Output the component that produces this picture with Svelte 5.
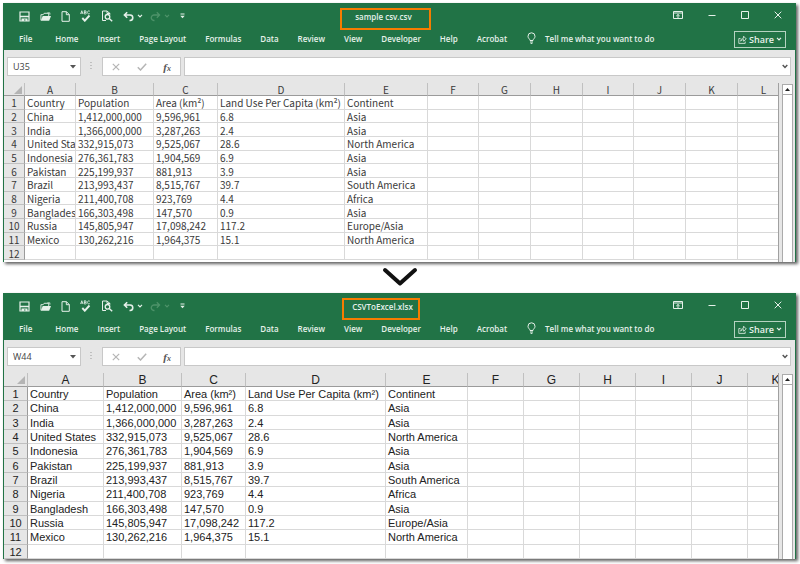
<script>
  const tabs = ['File', 'Home', 'Insert', 'Page Layout', 'Formulas', 'Data', 'Review', 'View', 'Developer', 'Help', 'Acrobat']

  const csvRows = [
    ['Country', 'Population', 'Area (km²)', 'Land Use Per Capita (km²)', 'Continent'],
    ['China', '1,412,000,000', '9,596,961', '6.8', 'Asia'],
    ['India', '1,366,000,000', '3,287,263', '2.4', 'Asia'],
    ['United States', '332,915,073', '9,525,067', '28.6', 'North America'],
    ['Indonesia', '276,361,783', '1,904,569', '6.9', 'Asia'],
    ['Pakistan', '225,199,937', '881,913', '3.9', 'Asia'],
    ['Brazil', '213,993,437', '8,515,767', '39.7', 'South America'],
    ['Nigeria', '211,400,708', '923,769', '4.4', 'Africa'],
    ['Bangladesh', '166,303,498', '147,570', '0.9', 'Asia'],
    ['Russia', '145,805,947', '17,098,242', '117.2', 'Europe/Asia'],
    ['Mexico', '130,262,216', '1,964,375', '15.1', 'North America'],
    []
  ]

  const books = [
    {
      id: 'csv',
      title: 'sample csv.csv',
      cell: 'U35',
      head: 21,
      cols: [51, 78, 64, 127, 83, 51, 52, 52, 51, 52, 52, 52]
    },
    {
      id: 'xlsx',
      title: 'CSVToExcel.xlsx',
      cell: 'W44',
      head: 24,
      cols: [76, 78, 64, 140, 82, 56, 56, 56, 56, 56, 56]
    }
  ]

  const letter = (i) => String.fromCharCode(65 + i)
  const tableWidth = (book) => book.cols.reduce((sum, w) => sum + w, book.head)
</script>

{#snippet chevron()}
  <svg width="6" height="4" viewBox="0 0 6 4"><path d="M1 .8 3 2.8 5 .8" stroke-width="1.2" /></svg>
{/snippet}

{#snippet excel(book)}
  <section class="window {book.id}">
    <header>
      <div class="titlebar">
        <div class="quick">
          <button aria-label="Save">
            <svg width="11" height="11" viewBox="0 0 11 11"><path d="M1 1h9v9H1z" stroke-width="1.2" /><path class="solid" d="M1 4.800h9v1.400H1zM2.500 7.500h6V10H6.500V8.500H5V10H2.500z" /></svg>
          </button>
          <button aria-label="Open">
            <svg width="11" height="11" viewBox="0 0 12 11"><path d="M1 9.500V3.500h2.500L4.500 2h5v3" /><path class="solid" d="M3 5h9l-2 5H.8z" /><path d="M8 1.500h2.800v2" stroke-width=".8" /></svg>
          </button>
          <button aria-label="New">
            <svg width="9" height="11" viewBox="0 0 9 11"><path d="M1 .7h4.500L8.300 3.600v6.700H1zM5.300.7v3h3" /></svg>
          </button>
          <button aria-label="Spelling">
            <svg width="11" height="12" viewBox="0 0 11 12"><path d="m.6 4 1.200-3.300L3 4M1 3h1.600M4.300.7V4h1.200a.8.8 0 0 0 0-1.700H4.300h1a.8.8 0 0 0 0-1.600zM9.800 1.200a1.500 1.500 0 1 0 0 2.400" stroke-width=".8" /><path d="m2.300 8 2.500 2.700L9.500 5.500" stroke-width="1.900" /></svg>
          </button>
          <button aria-label="Print Preview">
            <svg width="12" height="12" viewBox="0 0 12 12"><path d="M5 10.500H1.500V1H6l3 2.500v1M6 1v2.500h3" /><circle cx="6.500" cy="6.800" r="2.300" stroke-width="1.300" /><path d="m8.200 8.500 3 2.700" stroke-width="1.500" /></svg>
          </button>
          <button aria-label="Undo">
            <svg width="11" height="11" viewBox="0 0 11 11"><path d="M4.200 1.200 1.400 4l2.800 2.800M1.500 4h5.300a2.700 2.700 0 0 1 .4 5.500H6.500" stroke-width="1.600" /></svg>
          </button>
          <button class="more" aria-label="Undo history">{@render chevron()}</button>
          <button class="off" disabled aria-label="Redo">
            <svg width="11" height="11" viewBox="0 0 11 11"><path d="M6.800 1.200 9.600 4 6.800 6.800M9.500 4H4.200a2.700 2.700 0 0 0-.4 5.500h.7" stroke-width="1.300" /></svg>
          </button>
          <button class="more off" disabled aria-label="Redo history">{@render chevron()}</button>
          <button aria-label="Customize toolbar">
            <svg width="5" height="6" viewBox="0 0 5 6"><path d="M.5 1h4" /><path class="solid" d="M.3 2.800h4.400L2.500 5.200z" /></svg>
          </button>
        </div>
        <h2>{book.title}</h2>
        <div class="controls">
          <button aria-label="Ribbon display options">
            <svg width="10" height="8" viewBox="0 0 10 8"><path d="M.5.5h9v7h-9zM.5 2h9M5 7V3.500M3.300 5 5 3.500 6.700 5" /></svg>
          </button>
          <button aria-label="Minimize">
            <svg width="8" height="8" viewBox="0 0 8 8"><path d="M.5 4.500h7" /></svg>
          </button>
          <button aria-label="Maximize">
            <svg width="8" height="8" viewBox="0 0 8 8"><path d="M.5.5h7v7h-7z" /></svg>
          </button>
          <button aria-label="Close">
            <svg width="8" height="8" viewBox="0 0 8 8"><path d="m.7.700 6.600 6.600M7.300.700.7 7.300" /></svg>
          </button>
        </div>
      </div>
      <nav>
        {#each tabs as tab (tab)}
          <button class="tab">{tab}</button>
        {/each}
        <button class="tell">
          <svg width="9" height="12" viewBox="0 0 9 12"><path d="M3 8.500C3 7 1 6.500 1 4.300a3.500 3.500 0 0 1 7 0C8 6.500 6 7 6 8.500zM3 10h3M3.600 11.400h1.800" /></svg>
          Tell me what you want to do
        </button>
        <button class="share">
          <svg width="9" height="9" viewBox="0 0 9 9"><path d="M2.500 3.500H.8v4.900h6.400V6.500M2.700 6.200C3 4 4 3.200 5.600 3.200V1.200L8.300 4 5.600 6.200V4.600C4.400 4.600 3.500 5 2.700 6.200z" stroke-width=".8" /></svg>
          Share
          {@render chevron()}
        </button>
      </nav>
    </header>

    <div class="formula">
      <div class="box name">
        <input aria-label="Name box" value={book.cell} />
        <button aria-label="Choose name"><svg width="6" height="4" viewBox="0 0 6 4"><path class="solid" d="M0 0h6L3 3.500z" /></svg></button>
      </div>
      <svg class="dots" width="2" height="9" viewBox="0 0 2 9"><path d="M1 0v9" stroke-dasharray="1 2" /></svg>
      <div class="box tools">
        <button class="dim" aria-label="Cancel"><svg width="8" height="8" viewBox="0 0 8 8"><path d="m.8.800 6.400 6.400M7.200.800.8 7.200" stroke-width="1.200" /></svg></button>
        <button class="dim" aria-label="Enter"><svg width="10" height="8" viewBox="0 0 10 8"><path d="m.8 4.300 2.700 2.700L9.200.800" stroke-width="1.500" /></svg></button>
        <button class="fx" aria-label="Insert function">f<small>x</small></button>
      </div>
      <div class="box entry">
        <input aria-label="Formula bar" />
        <button aria-label="Expand formula bar"><svg width="6" height="5" viewBox="0 0 6 5"><path d="M.7 1 3 3.500 5.300 1" stroke-width="1.500" /></svg></button>
      </div>
    </div>

    <div class="grid">
      <div class="sheet">
        <table style:width="{tableWidth(book)}px">
          <colgroup>
            <col style:width="{book.head}px" />
            {#each book.cols as w}
              <col style:width="{w}px" />
            {/each}
          </colgroup>
          <thead>
            <tr>
              <th class="corner" aria-label="Select all"><svg width="8" height="8" viewBox="0 0 8 8"><path class="solid" d="M8 0v8H0z" /></svg></th>
              {#each book.cols as _, i}
                <th scope="col">{letter(i)}</th>
              {/each}
            </tr>
          </thead>
          <tbody>
            {#each csvRows as row, r}
              <tr>
                <th scope="row">{r + 1}</th>
                {#each book.cols as _, i}
                  <td>{row[i] ?? ''}</td>
                {/each}
              </tr>
            {/each}
          </tbody>
        </table>
      </div>
      <div class="scroll">
        <button aria-label="Scroll up"><svg width="5" height="3" viewBox="0 0 5 3"><path class="solid" d="M0 3h5L2.500 0z" /></svg></button>
      </div>
    </div>
  </section>
{/snippet}

<main>
  {@render excel(books[0])}
  <svg class="arrow" width="36" height="20" viewBox="0 0 36 20"><path d="M3 3 18 16.500 33 3" /></svg>
  {@render excel(books[1])}
</main>

<style>
  :global(body) {
    background: #fff;
  }

  main {
    display: flex;
    flex-direction: column;
    padding: 3px 4px 5px 3px;
    font-family: 'Open Sans', 'Noto Sans', sans-serif;
  }

  button {
    display: flex;
    align-items: center;
    justify-content: center;
    padding: 0;
    border: 0;
    background: none;
    color: inherit;
    font: inherit;
  }

  svg {
    display: block;
    flex-shrink: 0;
    fill: none;
    stroke: currentColor;
    stroke-width: 1;
  }

  .solid {
    fill: currentColor;
    stroke: none;
  }

  .window {
    border: solid #217346;
    border-width: 0 1px;
    background: #e6e6e6;
    box-shadow: 2px 2px 3px #000000a0;
  }

  header {
    height: 47px;
    background: #217346;
    color: #e6f1ea;
    font-size: 8px;
    font-weight: 600;
  }

  .titlebar {
    display: flex;
    height: 26px;
  }

  .quick {
    display: flex;
    align-items: center;
    flex: 0 0 43%;
    box-sizing: border-box;
    padding-left: 15px;
    gap: 10px;
  }

  .more {
    margin-left: -7px;
  }

  .off {
    color: #4d9269;
  }

  .more + .off {
    margin-left: -3px;
  }

  h2 {
    align-self: flex-start;
    height: 18px;
    margin: 5px 0 0 -2px;
    padding: 0 5px 0 8px;
    border: 2px solid #f57c00;
    font-size: 8px;
    font-weight: 600;
    line-height: 14px;
    white-space: nowrap;
  }

  .csv h2 {
    margin-left: -4px;
    padding: 0 17px 0 13px;
  }

  .controls {
    display: flex;
    align-items: center;
    justify-content: flex-end;
    flex: 1;
    gap: 25px;
    padding: 0 13px 3px 0;
  }

  nav {
    display: flex;
    align-items: center;
    gap: 19px;
    height: 20px;
    padding: 0 9px 0 15px;
    white-space: nowrap;
  }

  .tab,
  .tell {
    padding-bottom: 2px;
  }

  .tab:first-child {
    margin-right: 4px;
  }

  .tell {
    gap: 9px;
    margin-left: 1px;
  }

  .share {
    gap: 2px;
    height: 17px;
    margin-left: auto;
    padding: 0 3px;
    border: 1px solid #b5d3c1;
    font-size: 9px;
  }

  .formula {
    display: flex;
    align-items: center;
    padding: 7px 4px 7px 3px;
    color: #555;
  }

  .box {
    display: flex;
    align-items: center;
    box-sizing: border-box;
    height: 19px;
    border: 1px solid #c8c8c8;
    background: #fff;
  }

  input {
    flex: 1;
    min-width: 0;
    padding: 0 5px;
    border: 0;
    background: none;
    color: #444;
    font: 9px 'Open Sans', sans-serif;
    outline: 0;
  }

  .name {
    width: 74px;
    padding-right: 4px;
  }

  .dots {
    margin: 0 10px 0 9px;
    color: #999;
  }

  .tools {
    justify-content: space-between;
    width: 79px;
    padding: 0 9px;
  }

  .dim {
    color: #b5b5b5;
  }

  .fx {
    font: italic 700 11px 'Liberation Serif', serif;
  }

  .fx small {
    align-self: flex-end;
    font-size: 8px;
  }

  .entry {
    flex: 1;
    margin-left: 3px;
    padding-right: 2px;
  }

  .grid {
    display: flex;
    padding-right: 2px;
  }

  .sheet {
    flex: 1;
    min-width: 0;
    overflow: hidden;
    border-right: 1px solid #a0a0a0;
    background: #fff;
  }

  .csv .sheet {
    padding-bottom: 2px;
  }

  table {
    min-width: 100%;
    table-layout: fixed;
    border-spacing: 0;
    color: #222;
  }

  .csv table {
    height: 177px;
    color: #3a3a3a;
    font: 10px/11px 'Noto Sans CJK SC', sans-serif;
  }

  .xlsx table {
    height: 186px;
    font: 11px/12px 'Liberation Sans', sans-serif;
  }

  th,
  td {
    box-sizing: border-box;
    padding: 1px 0 0 2px;
    border: solid #d9d9d9;
    border-width: 0 1px 1px 0;
    overflow-x: clip;
    white-space: nowrap;
    text-align: left;
  }

  th {
    padding-left: 0;
    border-color: #c0c0c0;
    background: #e6e6e6;
    font-weight: inherit;
    text-align: center;
  }

  thead th {
    height: 13px;
    border-bottom-color: #9b9b9b;
  }

  .xlsx thead th {
    height: 14px;
    font-size: 12px;
  }

  tbody th {
    border-right-color: #9b9b9b;
  }

  .corner svg {
    margin: 0 2px 0 auto;
    color: #b4b4b4;
  }

  .scroll {
    box-sizing: border-box;
    width: 11px;
    margin: 1px 0 0 3px;
    border: solid #ababab;
    border-width: 1px 1px 0;
    background: #fff;
  }

  .scroll button {
    width: 100%;
    height: 10px;
    border-bottom: 1px solid #ababab;
    color: #222;
  }

  .arrow {
    align-self: center;
    margin: 5px 0 6px;
    color: #111;
    stroke-width: 4;
    stroke-linecap: round;
    stroke-linejoin: round;
  }
</style>
